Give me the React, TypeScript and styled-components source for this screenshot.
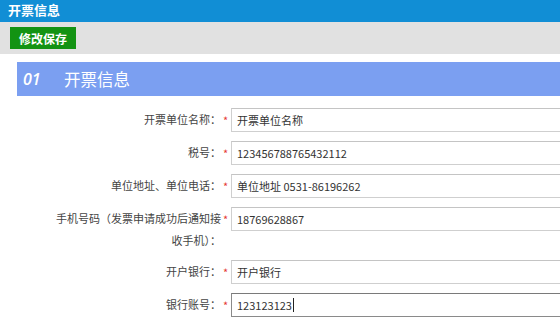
import styled, { createGlobalStyle } from 'styled-components';

const GlobalStyle = createGlobalStyle`
  html, body {
    margin: 0;
    padding: 0;
    background: #fff;
    overflow: hidden;
    font-family: "Noto Sans CJK SC", "Noto Sans", sans-serif;
  }
`;

const fields = [
  { label: '开票单位名称：', value: '开票单位名称' },
  { label: '税号：', value: '123456788765432112' },
  { label: '单位地址、单位电话：', value: '单位地址 0531-86196262' },
  { label: '手机号码（发票申请成功后通知接收手机）：', value: '18769628867' },
  { label: '开户银行：', value: '开户银行' },
  { label: '银行账号：', value: '123123123', focused: true },
];

const App = () => {
  return (
    <Viewport>
      <GlobalStyle />
      <Page>
        <TitleBar>开票信息</TitleBar>
        <Toolbar>
          <SaveButton type="button">修改保存</SaveButton>
        </Toolbar>
        <Section>
          <SectionHeader>
            <SectionNo>01</SectionNo>
            <SectionTitle>开票信息</SectionTitle>
          </SectionHeader>
          <Form>
            {fields.map((f) => (
              <Row key={f.label}>
                <Label>{f.label}</Label>
                <Star>*</Star>
                <Input $focused={!!f.focused}>
                  {f.value}
                  {f.focused && <Caret />}
                </Input>
              </Row>
            ))}
          </Form>
        </Section>
      </Page>
    </Viewport>
  );
};

// the page is wider than the window; fields run off the right edge
const Viewport = styled.div`
  width: 100vw;
  height: 100vh;
  overflow: hidden;
`;

const Page = styled.div`
  width: 640px;
`;

const TitleBar = styled.div`
  height: 22px;
  line-height: 20px;
  background: #118ed5;
  color: #fff;
  font-size: 13px;
  font-weight: bold;
  padding-left: 8px;
`;

const Toolbar = styled.div`
  height: 32px;
  background: #e1e1e1;
  display: flex;
  align-items: center;
  padding-left: 10px;
`;

const SaveButton = styled.button`
  width: 66px;
  height: 22px;
  border: none;
  padding: 0;
  background: #139313;
  color: #fff;
  font-family: inherit;
  font-size: 12px;
  font-weight: bold;
  cursor: pointer;
`;

const Section = styled.div`
  padding: 8px 0 0 17px;
`;

const SectionHeader = styled.div`
  height: 34px;
  background: #7b9ff1;
  display: flex;
  align-items: center;
  color: #fff;
`;

const SectionNo = styled.span`
  font-family: "Open Sans", "Noto Sans", sans-serif;
  font-style: italic;
  font-weight: 600;
  font-size: 16px;
  width: 41px;
  padding-left: 6px;
`;

const SectionTitle = styled.span`
  font-size: 16.5px;
`;

const Form = styled.div`
  display: flex;
  flex-direction: column;
  gap: 9px;
  padding: 12px 0 0 36px;
`;

const Row = styled.div`
  display: grid;
  grid-template-columns: 168px 10px 1fr;
  align-items: start;
`;

const Label = styled.div`
  font-size: 11px;
  line-height: 22px;
  color: #444;
  text-align: right;
`;

const Star = styled.span`
  color: #e53935;
  font-size: 11px;
  line-height: 24px;
  padding-left: 2px;
`;

const Input = styled.div<{ $focused: boolean }>`
  height: 24px;
  box-sizing: border-box;
  border: 1px solid ${(p) => (p.$focused ? '#8a8a8a' : '#cfcfcf')};
  border-top-color: ${(p) => (p.$focused ? '#7a7a7a' : '#c4c4c4')};
  padding-left: 5px;
  font-size: 11px;
  line-height: 22px;
  color: #333;
  display: flex;
  align-items: center;
  white-space: nowrap;
`;

const Caret = styled.span`
  display: inline-block;
  width: 1px;
  height: 14px;
  background: #222;
  margin-left: 1px;
`;

export default App;
